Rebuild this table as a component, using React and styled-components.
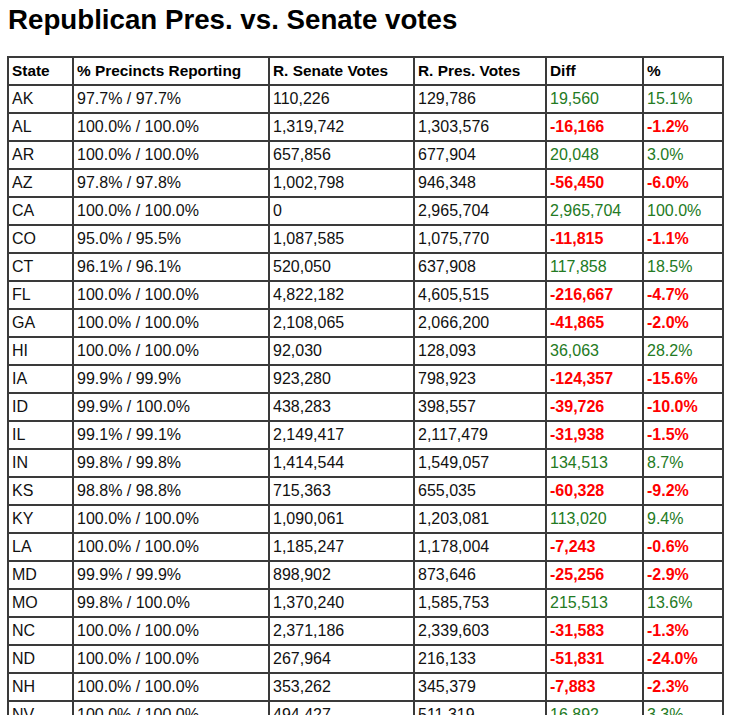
import React from "react";
import styled, { createGlobalStyle } from "styled-components";

const GlobalStyle = createGlobalStyle`
  html, body {
    margin: 0;
    padding: 0;
    background: #ffffff;
  }
  body {
    font-family: "Liberation Sans", Arial, sans-serif;
    color: #000;
  }
`;

const Page = styled.div`
  padding: 4px 8px 8px 8px;
`;

const Title = styled.h1`
  margin: 0 0 20px 0;
  font-family: "Liberation Sans", Arial, sans-serif;
  font-size: 27.7px;
  line-height: 32px;
  font-weight: 700;
  color: #000;
`;

const Table = styled.table`
  border-collapse: collapse;
  table-layout: fixed;
  width: 715px;
  margin-left: -1px;
  font-family: "Liberation Sans", Arial, sans-serif;
  font-size: 16px;
`;

const Col = styled.col`
  width: ${(p) => p.$w}px;
`;

const HeadCell = styled.th`
  border: 2px solid #3a3a3a;
  padding: 4px 3px;
  text-align: left;
  font-weight: 700;
  font-size: 15.4px;
  line-height: 18px;
  color: #000;
  white-space: nowrap;
`;

const toneColor = { up: "#237a23", down: "#ff0000", plain: "#111" };

const Cell = styled.td`
  border: 2px solid #3a3a3a;
  padding: 4px 3px;
  text-align: left;
  line-height: 18px;
  white-space: nowrap;
  color: ${(p) => toneColor[p.$tone || "plain"]};
  font-weight: ${(p) => (p.$tone === "down" ? 700 : 400)};
`;

const widths = [65, 196, 145, 132, 97, 80];
const headers = ["State", "% Precincts Reporting", "R. Senate Votes", "R. Pres. Votes", "Diff", "%"];

const rows = [
  ["AK", "97.7% / 97.7%", "110,226", "129,786", "19,560", "15.1%"],
  ["AL", "100.0% / 100.0%", "1,319,742", "1,303,576", "-16,166", "-1.2%"],
  ["AR", "100.0% / 100.0%", "657,856", "677,904", "20,048", "3.0%"],
  ["AZ", "97.8% / 97.8%", "1,002,798", "946,348", "-56,450", "-6.0%"],
  ["CA", "100.0% / 100.0%", "0", "2,965,704", "2,965,704", "100.0%"],
  ["CO", "95.0% / 95.5%", "1,087,585", "1,075,770", "-11,815", "-1.1%"],
  ["CT", "96.1% / 96.1%", "520,050", "637,908", "117,858", "18.5%"],
  ["FL", "100.0% / 100.0%", "4,822,182", "4,605,515", "-216,667", "-4.7%"],
  ["GA", "100.0% / 100.0%", "2,108,065", "2,066,200", "-41,865", "-2.0%"],
  ["HI", "100.0% / 100.0%", "92,030", "128,093", "36,063", "28.2%"],
  ["IA", "99.9% / 99.9%", "923,280", "798,923", "-124,357", "-15.6%"],
  ["ID", "99.9% / 100.0%", "438,283", "398,557", "-39,726", "-10.0%"],
  ["IL", "99.1% / 99.1%", "2,149,417", "2,117,479", "-31,938", "-1.5%"],
  ["IN", "99.8% / 99.8%", "1,414,544", "1,549,057", "134,513", "8.7%"],
  ["KS", "98.8% / 98.8%", "715,363", "655,035", "-60,328", "-9.2%"],
  ["KY", "100.0% / 100.0%", "1,090,061", "1,203,081", "113,020", "9.4%"],
  ["LA", "100.0% / 100.0%", "1,185,247", "1,178,004", "-7,243", "-0.6%"],
  ["MD", "99.9% / 99.9%", "898,902", "873,646", "-25,256", "-2.9%"],
  ["MO", "99.8% / 100.0%", "1,370,240", "1,585,753", "215,513", "13.6%"],
  ["NC", "100.0% / 100.0%", "2,371,186", "2,339,603", "-31,583", "-1.3%"],
  ["ND", "100.0% / 100.0%", "267,964", "216,133", "-51,831", "-24.0%"],
  ["NH", "100.0% / 100.0%", "353,262", "345,379", "-7,883", "-2.3%"],
  ["NV", "100.0% / 100.0%", "494,427", "511,319", "16,892", "3.3%"],
];

export default function App() {
  return (
    <>
      <GlobalStyle />
      <Page>
        <Title>Republican Pres. vs. Senate votes</Title>
        <Table>
          <colgroup>
            {widths.map((w, i) => (
              <Col key={i} $w={w} />
            ))}
          </colgroup>
          <thead>
            <tr>
              {headers.map((h) => (
                <HeadCell key={h}>{h}</HeadCell>
              ))}
            </tr>
          </thead>
          <tbody>
            {rows.map((r) => {
              const tone = r[4].startsWith("-") ? "down" : "up";
              return (
                <tr key={r[0]}>
                  <Cell>{r[0]}</Cell>
                  <Cell>{r[1]}</Cell>
                  <Cell>{r[2]}</Cell>
                  <Cell>{r[3]}</Cell>
                  <Cell $tone={tone}>{r[4]}</Cell>
                  <Cell $tone={tone}>{r[5]}</Cell>
                </tr>
              );
            })}
          </tbody>
        </Table>
      </Page>
    </>
  );
}
